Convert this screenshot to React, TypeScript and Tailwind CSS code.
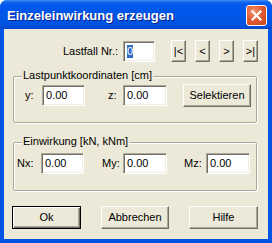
import React from "react";

const font = { fontFamily: '"Liberation Sans", Arial, sans-serif' };

function Edit({ w, value, selected }: { w: string; value: string; selected?: boolean }) {
	return (
		<div
			className={`${w} h-[21px] bg-white border border-t-[#ACA899] border-l-[#ACA899] border-b-white border-r-white shadow-[inset_1px_1px_0_#716F64,inset_-1px_-1px_0_#F1EFE2] flex items-center pl-[3px] text-[11px] text-black`}
		>
			{selected ? <span className="bg-[#316AC5] text-white leading-[13px] px-[0px]">{value}</span> : value}
		</div>
	);
}

function Btn({ w, h = "h-[23px]", children, def }: { w: string; h?: string; children: React.ReactNode; def?: boolean }) {
	return (
		<div
			className={`${w} ${h} flex items-center justify-center text-[11px] text-black bg-[#ECE9D8] border ${
				def
					? "border-black shadow-[inset_1px_1px_0_#fff,inset_-1px_-1px_0_#716F64,inset_-2px_-2px_0_#ACA899]"
					: "border-t-white border-l-white border-b-[#716F64] border-r-[#716F64] shadow-[inset_-1px_-1px_0_#ACA899]"
			}`}
		>
			{children}
		</div>
	);
}

function Group({ title, h, children }: { title: string; h: string; children: React.ReactNode }) {
	return (
		<div className={`relative ml-[9px] w-[244px] ${h} border border-[#ACA899] rounded-[2px] shadow-[inset_1px_1px_0_#fff,1px_1px_0_#fff]`}>
			<span className="absolute left-[8px] -top-[8px] bg-[#ECE9D8] px-[1px] text-[11px] leading-[13px] text-black">{title}</span>
			{children}
		</div>
	);
}

export default function App() {
	return (
		<div className="w-[272px] h-[243px] flex flex-col bg-[#0054E3] rounded-t-[7px] overflow-hidden select-none" style={font}>
			<div className="h-[29px] shrink-0 flex items-center justify-between pl-[7px] pr-[5px] bg-[linear-gradient(to_bottom,#3C8EF5_0%,#0F63EB_8%,#0058EE_18%,#0056E8_50%,#0053E0_85%,#0046CC_100%)]">
				<span className="text-white font-bold text-[13px] leading-[13px] pt-[1px] [text-shadow:1px_1px_0_#0A1E8A]">
					Einzeleinwirkung erzeugen
				</span>
				<div className="w-[21px] h-[21px] mt-[1px] rounded-[3px] border border-white bg-[radial-gradient(circle_at_35%_30%,#F29A7A_0%,#E35B32_45%,#C8421A_100%)] flex items-center justify-center">
					<svg width="11" height="11" viewBox="0 0 11 11">
						<path d="M1.5 1.5 L9.5 9.5 M9.5 1.5 L1.5 9.5" stroke="#fff" strokeWidth="2.2" strokeLinecap="square" />
					</svg>
				</div>
			</div>
			<div className="mx-[4px] mb-[4px] flex-1 bg-[#ECE9D8] flex flex-col text-black">
				<div className="mt-[11px] flex items-center pl-[59px]">
					<span className="w-[60px] text-[11px]">Lastfall Nr.:</span>
					<Edit w="w-[32px]" value="0" selected />
					<div className="ml-[16px] flex gap-[9px]">
						<Btn w="w-[15px]" h="h-[22px]">|&lt;</Btn>
						<Btn w="w-[15px]" h="h-[22px]">&lt;</Btn>
						<Btn w="w-[15px]" h="h-[22px]">&gt;</Btn>
						<Btn w="w-[15px]" h="h-[22px]">&gt;|</Btn>
					</div>
				</div>

				<div className="mt-[14px]">
					<Group title="Lastpunktkoordinaten [cm]" h="h-[47px]">
						<div className="flex items-center pl-[11px] pt-[7px] text-[11px]">
							<span className="w-[17px]">y:</span>
							<Edit w="w-[43px]" value="0.00" />
							<span className="ml-[23px] w-[15px]">z:</span>
							<Edit w="w-[44px]" value="0.00" />
							<div className="ml-[16px]">
								<Btn w="w-[68px]">Selektieren</Btn>
							</div>
						</div>
					</Group>
				</div>

				<div className="mt-[19px]">
					<Group title="Einwirkung [kN, kNm]" h="h-[49px]">
						<div className="flex items-center pl-[3px] pt-[10px] text-[11px]">
							<span className="w-[24px]">Nx:</span>
							<Edit w="w-[43px]" value="0.00" />
							<span className="ml-[18px] w-[21px]">My:</span>
							<Edit w="w-[44px]" value="0.00" />
							<span className="ml-[17px] w-[22px]">Mz:</span>
							<Edit w="w-[44px]" value="0.00" />
						</div>
					</Group>
				</div>

				<div className="mt-[15px] ml-[8px] flex gap-[20px]">
					<Btn w="w-[69px]" def>Ok</Btn>
					<Btn w="w-[68px]">Abbrechen</Btn>
					<Btn w="w-[69px]">Hilfe</Btn>
				</div>
			</div>
		</div>
	);
}
